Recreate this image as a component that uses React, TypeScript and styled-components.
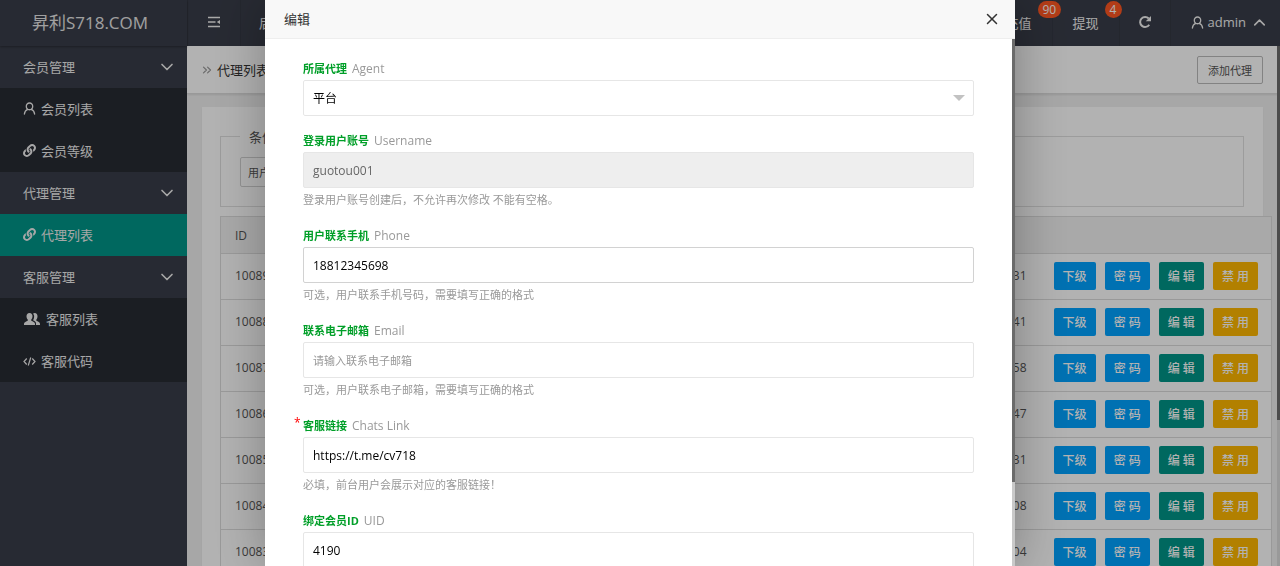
import React from "react";
import styled, { createGlobalStyle, css } from "styled-components";
import { FaLink } from "react-icons/fa";
import { ChevronDown, ChevronUp, ChevronsRight, X } from "lucide-react";

const GlobalStyle = createGlobalStyle`
  *, *::before, *::after { box-sizing: border-box; }
  html, body { margin: 0; height: 100%; overflow: hidden; }
  body, button, input, select {
    font-family: "Open Sans", "Noto Sans CJK SC", sans-serif;
  }
  body { background: #f0f0f0; color: #555; font-size: 13px; }
  button { cursor: pointer; }
  a { color: inherit; text-decoration: none; }
`;

const Shell = styled.div`
  display: grid;
  grid-template: 46px 1fr / 187px minmax(0, 1fr);
  height: 100vh;
  overflow: hidden;
`;

const Logo = styled.h1`
  display: flex;
  align-items: center;
  justify-content: center;
  margin: 0;
  padding: 0 7px 4px 0;
  background: #393d49;
  box-shadow: 0 1px 2px rgba(0, 0, 0, 0.3);
  color: #e6e6e6;
  font-size: 17px;
  font-weight: 400;
  z-index: 1;
`;

const TopBar = styled.header`
  display: flex;
  justify-content: space-between;
  background: #393d49;
  color: #f2f2f2;
`;

const TopGroup = styled.nav`
  display: flex;
`;

const TopItem = styled.a<{ $pad: string }>`
  position: relative;
  display: flex;
  align-items: center;
  gap: 4px;
  padding: ${(p) => p.$pad};
  border-left: 1px solid #343843;
`;

const Badge = styled.span`
  position: absolute;
  top: 1px;
  left: 52px;
  min-width: 17px;
  padding: 0 5px;
  border-radius: 9px;
  background: #ff5722;
  color: #fff;
  font-size: 12px;
  line-height: 17px;
  text-align: center;
  z-index: 1;
`;

const Sidebar = styled.nav`
  background: #393d49;
  color: #efefef;
  overflow: hidden;
`;

const MenuHead = styled.button`
  display: flex;
  align-items: center;
  justify-content: space-between;
  width: 100%;
  height: 42px;
  padding: 0 10px 0 23px;
  border: 0;
  background: transparent;
  color: #efefef;
  font-size: 13px;
  line-height: 40px;
`;

const SubMenu = styled.div`
  background: #282b33;
`;

const MenuLink = styled.a<{ $active?: boolean }>`
  display: flex;
  align-items: center;
  gap: 5px;
  height: 42px;
  padding: 0 0 1px 23px;
  ${(p) => p.$active && css`background: #009688;`}
`;

const Main = styled.main`
  position: relative;
  overflow: hidden;
`;

const PageBar = styled.div`
  display: flex;
  align-items: center;
  justify-content: space-between;
  height: 48px;
  padding: 0 14px 0 13px;
  background: #fff;
  border-bottom: 1px solid #dcdcdc;
  box-shadow: 0 1px 2px rgba(0, 0, 0, 0.1);
`;

const PageTitle = styled.h2`
  display: flex;
  align-items: center;
  gap: 3px;
  margin: 0;
  color: #333;
  font-size: 13px;
  font-weight: 400;
  svg { color: #999; }
`;

const PlainButton = styled.button`
  height: 28px;
  margin-right: 3px;
  padding: 0 10px;
  border: 1px solid #bbb;
  border-radius: 2px;
  background: #fff;
  color: #555;
  font-size: 11px;
`;

const Card = styled.section`
  margin: 13px 17px 0 15px;
  padding: 20px 19px 0 18px;
  background: #fff;
  box-shadow: 0 1px 2px rgba(0, 0, 0, 0.05);
`;

const SearchBox = styled.fieldset`
  height: 80px;
  margin: 0 0 9px;
  padding: 11px 19px;
  border: 1px solid #e0e0e0;
  legend { padding: 0 9px; color: #555; }
`;

const SearchSelect = styled.select`
  height: 30px;
  padding: 0 7px;
  border: 1px solid #d2d2d2;
  border-radius: 2px;
  appearance: none;
  background: #fff;
  color: #555;
  font-size: 11px;
`;

const TableWrap = styled.div`
  margin-right: -28px;
  background: #fff;
`;

const Table = styled.table`
  width: 100%;
  border: 1px solid #dcdcdc;
  border-collapse: collapse;
  font-size: 12px;
  th, td { padding: 0 14px; text-align: left; font-weight: 400; }
  th { height: 37px; background: #f2f2f2; }
  td { height: 46px; padding: 0 13px 2px 14px; border-top: 1px solid #dcdcdc; }
  th:last-child, td:last-child { width: 232px; }
  td:nth-child(3) { text-align: right; }
`;

const Actions = styled.div`
  display: flex;
  justify-content: flex-end;
  gap: 9px;
`;

const tones = { blue: "#00a2ff", green: "#009688", amber: "#ffb800" };

const ActionButton = styled.button<{ $tone: keyof typeof tones }>`
  height: 28px;
  padding: 0 9px;
  border: 0;
  border-radius: 2px;
  background: ${(p) => tones[p.$tone]};
  color: #fff;
  font-size: 12px;
  font-weight: 500;
  white-space: nowrap;
`;

const PageScroll = styled.div`
  position: absolute;
  top: 0;
  right: 0;
  width: 3px;
  height: 100%;
  background: #dcdcdc;
  &::before {
    content: "";
    display: block;
    height: 72%;
    background: #6e6e6e;
  }
`;

const Shade = styled.div`
  position: fixed;
  inset: 0;
  display: flex;
  justify-content: center;
  background: rgba(0, 0, 0, 0.3);
  z-index: 10;
`;

const Dialog = styled.div`
  position: relative;
  display: flex;
  flex-direction: column;
  width: 750px;
  max-width: 100%;
  height: 100%;
  background: #fff;
  box-shadow: 1px 1px 50px rgba(0, 0, 0, 0.3);
`;

const DialogHead = styled.div`
  display: flex;
  flex: none;
  align-items: center;
  justify-content: space-between;
  height: 39px;
  padding: 0 14px 1px 19px;
  border-bottom: 1px solid #eee;
  background: #f8f8f8;
  h2 { margin: 0; color: #333; font-size: 13px; font-weight: 400; line-height: 18px; }
`;

const CloseButton = styled.button`
  display: flex;
  padding: 0;
  border: 0;
  background: none;
  color: #333;
`;

const DialogBody = styled.div`
  display: flex;
  flex: 1;
  min-height: 0;
`;

const Form = styled.form`
  flex: 1;
  padding: 19px 38px;
  overflow: hidden;
`;

const DialogScroll = styled.div`
  width: 3px;
  background: #c9c9c9;
  &::before {
    content: "";
    display: block;
    height: 84%;
    background: #6b6b6b;
  }
`;

const Field = styled.div`
  margin-bottom: 14px;
`;

const Label = styled.label<{ $required?: boolean }>`
  position: relative;
  display: block;
  height: 22px;
  color: #999;
  font-size: 12px;
  line-height: 22px;
  b { margin-right: 5px; color: #009f28; font-size: 11px; }
  ${(p) => p.$required && css`
    &::before {
      content: "*";
      position: absolute;
      left: -9px;
      top: -3px;
      color: #f00;
    }
  `}
`;

const control = css`
  display: block;
  width: 100%;
  height: 36px;
  padding: 0 9px;
  border: 1px solid #e6e6e6;
  border-radius: 2px;
  background: #fff;
  color: #000;
  font-size: 12px;
  outline: 0;
`;

const TextInput = styled.input<{ $strong?: boolean }>`
  ${control}
  ${(p) => p.$strong && css`border-color: #d2d2d2;`}
  &::placeholder { color: #999; font-size: 11px; }
  &:disabled { background: #eee; color: #666; }
`;

const SelectBox = styled.div`
  position: relative;
  &::after {
    content: "";
    position: absolute;
    top: 15px;
    right: 9px;
    border: 6px solid transparent;
    border-top-color: #c2c2c2;
    border-bottom: 0;
  }
`;

const SelectInput = styled.select`
  ${control}
  appearance: none;
`;

const Hint = styled.p`
  height: 23px;
  margin: 0;
  color: #999;
  font-size: 11px;
  line-height: 23px;
`;

const UserIcon = () => (
  <svg width="13" height="13" viewBox="0 0 26 26" fill="none" stroke="currentColor" strokeWidth="2.6" strokeLinecap="round">
    <path d="M13 2c-3.800 0-6.400 2.800-6.400 6.600S9.200 15.500 13 15.500s6.400-3 6.400-6.900S16.800 2 13 2z" />
    <path d="M9.500 14.800C5.500 16.500 3.200 19.500 2.800 24M16.500 14.800c4 1.700 6.300 4.700 6.700 9.200" />
  </svg>
);

const GroupIcon = () => (
  <svg width="18" height="14" viewBox="0 0 36 28" fill="currentColor">
    <path d="M13 2c4 0 6 2.800 6 6.500 0 3-1.200 5-2.500 6.500v2.500c3 1.500 7.500 2.500 7.500 6V26H2v-2.500c0-3.500 4.500-4.500 7.500-6V15C8.200 13.500 7 11.500 7 8.500 7 4.800 9 2 13 2z" />
    <path d="M20 3.500c1-1 2-1.500 3.500-1.500C27 2 29 4.800 29 8.500c0 3-1 5-2.300 6.500v2.500c3 1.500 7.300 2.500 7.300 6V26h-8v-3c0-3.500-3-5-6-6.300 1.500-2 2.300-5 2.300-8 0-2-.8-4-2.300-5.200z" />
  </svg>
);

const CodeIcon = () => (
  <svg width="13" height="12" viewBox="0 0 26 24" fill="none" stroke="currentColor" strokeWidth="2.400">
    <path d="M7.500 7L2 13l5.500 6M18.500 7L24 13l-5.500 6M15.500 5l-5 16" />
  </svg>
);

const FoldIcon = () => (
  <svg width="14" height="12" viewBox="0 0 28 24" fill="none" stroke="currentColor" strokeWidth="3">
    <path d="M2 3h24M2 12h15M2 21h24" />
    <path d="M26 8v8L19.500 12z" fill="currentColor" stroke="none" />
  </svg>
);

const RefreshIcon = () => (
  <svg width="14" height="14" viewBox="0 0 28 28" fill="none" stroke="currentColor" strokeWidth="4">
    <path d="M22.500 19.500a10 10 0 1 1-1-12.500" />
    <path d="M26 2v10.500H15.500z" fill="currentColor" stroke="none" />
  </svg>
);

const menu = [
  { title: "会员管理", items: [{ text: "会员列表", icon: <UserIcon /> }, { text: "会员等级", icon: <FaLink size={13} /> }] },
  { title: "代理管理", items: [{ text: "代理列表", icon: <FaLink size={13} />, active: true }] },
  { title: "客服管理", items: [{ text: "客服列表", icon: <GroupIcon /> }, { text: "客服代码", icon: <CodeIcon /> }] },
];

const agents = [
  { id: 10089, name: "guotou007", time: "2024-05-12 18:20:31" },
  { id: 10088, name: "guotou006", time: "2024-05-12 17:42:41" },
  { id: 10087, name: "guotou005", time: "2024-05-11 15:06:58" },
  { id: 10086, name: "guotou004", time: "2024-05-11 14:33:47" },
  { id: 10085, name: "guotou003", time: "2024-05-10 12:15:31" },
  { id: 10084, name: "guotou002", time: "2024-05-10 11:28:08" },
  { id: 10083, name: "guotou001", time: "2024-05-10 10:51:04" },
];

type FieldSpec = {
  id: string;
  label: string;
  note: string;
  value?: string;
  placeholder?: string;
  hint?: string;
  disabled?: boolean;
  required?: boolean;
  strong?: boolean;
};

const fields: FieldSpec[] = [
  { id: "username", label: "登录用户账号", note: "Username", value: "guotou001", hint: "登录用户账号创建后，不允许再次修改 不能有空格。", disabled: true },
  { id: "phone", label: "用户联系手机", note: "Phone", value: "18812345698", hint: "可选，用户联系手机号码，需要填写正确的格式", strong: true },
  { id: "email", label: "联系电子邮箱", note: "Email", placeholder: "请输入联系电子邮箱", hint: "可选，用户联系电子邮箱，需要填写正确的格式" },
  { id: "chats", label: "客服链接", note: "Chats Link", value: "https://t.me/cv718", hint: "必填，前台用户会展示对应的客服链接！", required: true },
  { id: "uid", label: "绑定会员ID", note: "UID", value: "4190" },
];

export default function App() {
  return (
    <>
      <GlobalStyle />
      <Shell>
        <Logo>昇利S718.COM</Logo>
        <TopBar>
          <TopGroup>
            <TopItem href="#" $pad="0 19px 2px" aria-label="折叠菜单"><FoldIcon /></TopItem>
            <TopItem href="#" $pad="0 18px 2px">后台</TopItem>
          </TopGroup>
          <TopGroup>
            <TopItem href="#" $pad="0 20px 2px">充值<Badge>90</Badge></TopItem>
            <TopItem href="#" $pad="0 20px 2px">提现<Badge>4</Badge></TopItem>
            <TopItem href="#" $pad="0 18px 2px" aria-label="刷新"><RefreshIcon /></TopItem>
            <TopItem href="#" $pad="0 11px 2px 20px"><UserIcon />admin<ChevronUp size={19} strokeWidth={2} /></TopItem>
          </TopGroup>
        </TopBar>
        <Sidebar>
          {menu.map((group) => (
            <div key={group.title}>
              <MenuHead>{group.title}<ChevronDown size={20} strokeWidth={2} /></MenuHead>
              <SubMenu>
                {group.items.map((item) => (
                  <MenuLink key={item.text} href="#" $active={"active" in item}>{item.icon}{item.text}</MenuLink>
                ))}
              </SubMenu>
            </div>
          ))}
        </Sidebar>
        <Main>
          <PageBar>
            <PageTitle><ChevronsRight size={14} strokeWidth={2} />代理列表</PageTitle>
            <PlainButton>添加代理</PlainButton>
          </PageBar>
          <Card>
            <SearchBox>
              <legend>条件</legend>
              <SearchSelect aria-label="搜索条件"><option>用户账号</option></SearchSelect>
            </SearchBox>
            <TableWrap>
              <Table>
                <thead>
                  <tr><th>ID</th><th>账号</th><th>时间</th><th aria-label="操作" /></tr>
                </thead>
                <tbody>
                  {agents.map((agent) => (
                    <tr key={agent.id}>
                      <td>{agent.id}</td>
                      <td>{agent.name}</td>
                      <td>{agent.time}</td>
                      <td>
                        <Actions>
                          <ActionButton $tone="blue">下级</ActionButton>
                          <ActionButton $tone="blue">密 码</ActionButton>
                          <ActionButton $tone="green">编 辑</ActionButton>
                          <ActionButton $tone="amber">禁 用</ActionButton>
                        </Actions>
                      </td>
                    </tr>
                  ))}
                </tbody>
              </Table>
            </TableWrap>
          </Card>
          <PageScroll />
        </Main>
      </Shell>
      <Shade>
        <Dialog role="dialog" aria-labelledby="dialog-title">
          <DialogHead>
            <h2 id="dialog-title">编辑</h2>
            <CloseButton aria-label="关闭"><X size={18} strokeWidth={2} /></CloseButton>
          </DialogHead>
          <DialogBody>
            <Form>
              <Field>
                <Label htmlFor="agent"><b>所属代理</b>Agent</Label>
                <SelectBox>
                  <SelectInput id="agent"><option>平台</option></SelectInput>
                </SelectBox>
              </Field>
              {fields.map((f) => (
                <Field key={f.id}>
                  <Label htmlFor={f.id} $required={f.required}><b>{f.label}</b>{f.note}</Label>
                  <TextInput id={f.id} defaultValue={f.value} placeholder={f.placeholder} disabled={f.disabled} $strong={f.strong} />
                  {f.hint && <Hint>{f.hint}</Hint>}
                </Field>
              ))}
            </Form>
            <DialogScroll />
          </DialogBody>
        </Dialog>
      </Shade>
    </>
  );
}
